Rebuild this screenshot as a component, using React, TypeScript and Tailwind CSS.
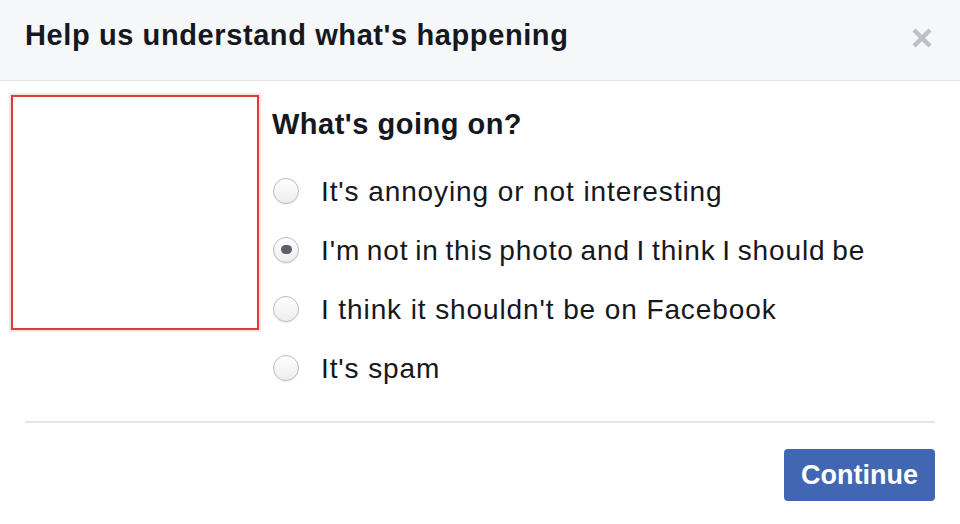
import React, { useState } from "react";

const OPTIONS = [
  { label: "It's annoying or not interesting", tight: false },
  { label: "I'm not in this photo and I think I should be", tight: true },
  { label: "I think it shouldn't be on Facebook", tight: false },
  { label: "It's spam", tight: false },
];

function Radio({ checked }: { checked: boolean }) {
  return (
    <span className="flex h-[26px] w-[26px] shrink-0 items-center justify-center rounded-full border border-[#bcbcbc] bg-gradient-to-b from-white to-[#ededed] shadow-[0_1px_1px_rgba(0,0,0,0.08)]">
      {checked && <span className="h-[9px] w-[11px] rounded-full bg-[#5b5f6f]" />}
    </span>
  );
}

export default function App() {
  const [selected, setSelected] = useState(1);

  return (
    <div className="h-[524px] w-[960px] overflow-hidden bg-white font-['Liberation_Sans',Arial,sans-serif] text-[#151820]">
      <div className="flex h-[81px] items-start justify-between border-b border-[#e3e4e7] bg-[#f6f7f9] pl-[25px] pr-[27px]">
        <h1 className="mt-[19px] text-[29px] font-bold leading-[33px] tracking-[0.6px]">
          Help us understand what's happening
        </h1>
        <button className="mt-[27px] text-[#bcc0c7]" aria-label="Close">
          <svg width="22" height="22" viewBox="0 0 22 22">
            <path d="M3 3 L19 19 M19 3 L3 19" stroke="currentColor" strokeWidth="4.5" strokeLinecap="butt" />
          </svg>
        </button>
      </div>

      <div className="flex items-start pl-[11px] pt-[14px]">
        <div className="h-[235px] w-[248px] shrink-0 border-2 border-[#dd3a3a] shadow-[0_0_0_2px_#fbe6df]" />
        <div className="ml-[13px] pt-[13px]">
          <h2 className="text-[29px] font-bold leading-[32px] tracking-[0.5px]">What's going on?</h2>
          <div className="mt-[21px]">
            {OPTIONS.map((opt, i) => (
              <label
                key={opt.label}
                onClick={() => setSelected(i)}
                className="flex h-[59px] cursor-pointer items-center gap-[22px] pl-[1px]"
              >
                <Radio checked={selected === i} />
                <span
                  className={
                    opt.tight
                      ? "pt-[2px] text-[28px] leading-[32px] tracking-[0.9px] [word-spacing:-2px]"
                      : "pt-[2px] text-[28px] leading-[32px] tracking-[0.9px]"
                  }
                >
                  {opt.label}
                </span>
              </label>
            ))}
          </div>
        </div>
      </div>

      <div className="mx-[25px] mt-[24px] h-[2px] bg-[#e4e5e8]" />

      <div className="flex justify-end pr-[25px] pt-[26px]">
        <button className="h-[52px] w-[151px] rounded-[4px] bg-[#4267b2] text-[27px] font-bold text-white">
          Continue
        </button>
      </div>
    </div>
  );
}
